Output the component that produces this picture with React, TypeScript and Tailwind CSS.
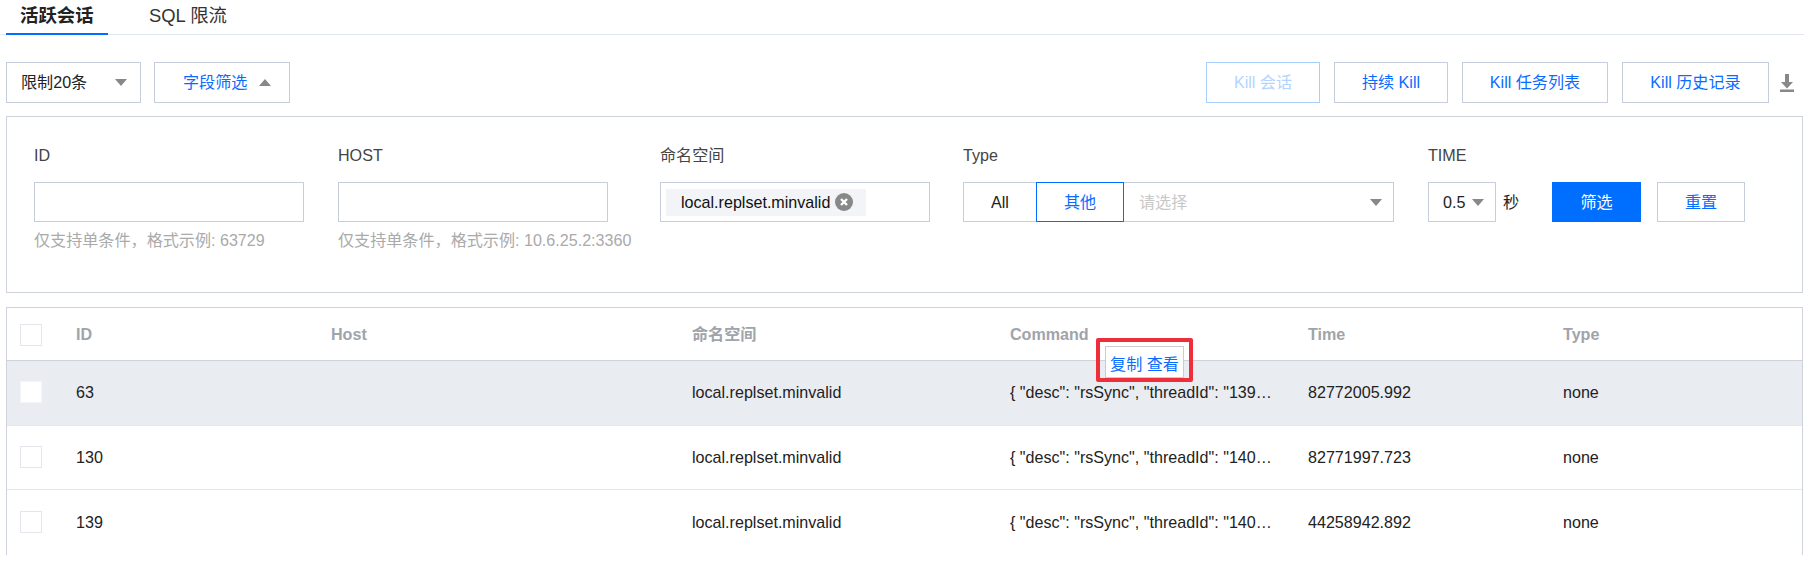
import React from 'react';

const rows = [
  { id: '63', thread: '139', time: '82772005.992', hover: true },
  { id: '130', thread: '140', time: '82771997.723', hover: false },
  { id: '139', thread: '140', time: '44258942.892', hover: false },
];

const gridCols = 'grid grid-cols-[69px_255px_361px_318px_298px_255px_1fr] items-center';

function Caret({ up = false }: { up?: boolean }) {
  return (
    <svg width="12" height="7" viewBox="0 0 12 7" className="shrink-0">
      <path d={up ? 'M6 0l6 7H0z' : 'M0 0h12L6 7z'} fill="#888888" />
    </svg>
  );
}

function OutlineButton({ label, className = '' }: { label: string; className?: string }) {
  return (
    <button className={`h-[41px] border bg-white text-center ${className}`}>
      {label}
    </button>
  );
}

function Checkbox({ className = '' }: { className?: string }) {
  return <span className={`block h-[22px] w-[22px] border bg-white ${className}`} />;
}

function Field({ label, children }: { label: string; children: React.ReactNode }) {
  return (
    <div>
      <div className="h-6 leading-6 text-[#444444]">{label}</div>
      <div className="mt-[15px]">{children}</div>
    </div>
  );
}

export default function App() {
  return (
    <div className="relative h-[570px] w-[1804px] overflow-hidden bg-white font-['Liberation_Sans','Noto_Sans_CJK_SC',sans-serif] text-[16.1px] text-[#222222]">
      {/* Tabs */}
      <div className="flex h-[35px] border-b border-[#e3e7f0] pl-[6px] text-[18.4px]">
        <div className="h-[35px] w-[102px] border-b-2 border-[#006eff] pl-[14px] font-bold leading-[31px] text-[#222222]">
          活跃会话
        </div>
        <div className="ml-[41px] leading-[31px] text-[#333333]">SQL 限流</div>
      </div>

      {/* Toolbar */}
      <div className="mt-[27px] flex items-center justify-between pl-[6px] pr-[10px]">
        <div className="flex gap-[13px]">
          <div className="flex h-[41px] w-[135px] items-center justify-between border border-[#c6cedb] pl-[14px] pr-[13px]">
            <span>限制20条</span>
            <Caret />
          </div>
          <div className="flex h-[41px] w-[136px] items-center gap-[12px] border border-[#c6cedb] pl-[28px] text-[#0a6cff]">
            <span>字段筛选</span>
            <Caret up />
          </div>
        </div>
        <div className="flex items-center">
          <OutlineButton label="Kill 会话" className="w-[114px] border-[#a8d0ff] text-[#b3d4ff]" />
          <OutlineButton label="持续 Kill" className="ml-[14px] w-[114px] border-[#c6cedb] text-[#0a6cff]" />
          <OutlineButton label="Kill 任务列表" className="ml-[14px] w-[146px] border-[#c6cedb] text-[#0a6cff]" />
          <OutlineButton label="Kill 历史记录" className="ml-[14px] w-[147px] border-[#c6cedb] text-[#0a6cff]" />
          <svg width="14" height="18" viewBox="0 0 14 18" className="ml-[11px] mt-[1px]">
            <path d="M5 0h4v8h4l-6 6.5L1 8h4zM0 15.5h14V18H0z" fill="#888888" />
          </svg>
        </div>
      </div>

      {/* Filter panel */}
      <div className="ml-[6px] mr-[1px] mt-[13px] grid h-[177px] grid-cols-[304px_322px_303px_465px_1fr] border border-[#cdd2dc] pl-[27px] pt-[26px]">
        <Field label="ID">
          <div className="h-[40px] w-[270px] border border-[#c6cedb]" />
          <div className="mt-[6px] h-6 whitespace-nowrap leading-6 text-[#aaaaaa]">仅支持单条件，格式示例: 63729</div>
        </Field>
        <Field label="HOST">
          <div className="h-[40px] w-[270px] border border-[#c6cedb]" />
          <div className="mt-[6px] h-6 whitespace-nowrap leading-6 text-[#aaaaaa]">仅支持单条件，格式示例: 10.6.25.2:3360</div>
        </Field>
        <Field label="命名空间">
          <div className="flex h-[40px] w-[270px] items-center border border-[#c6cedb] pl-[5px]">
            <div className="flex h-[27px] w-[200px] items-center gap-[5px] bg-[#f2f4f8] pl-[15px] text-[#111111]">
              <span className="whitespace-nowrap">local.replset.minvalid</span>
              <svg width="18" height="18" viewBox="0 0 18 18" className="shrink-0">
                <circle cx="9" cy="9" r="9" fill="#888888" />
                <path d="M6 6l6 6M12 6l-6 6" stroke="#ffffff" strokeWidth="2.4" />
              </svg>
            </div>
          </div>
        </Field>
        <Field label="Type">
          <div className="flex h-[40px] w-[431px]">
            <div className="flex w-[73px] items-center justify-center border-y border-l border-[#c6cedb] text-[#222222]">All</div>
            <div className="flex w-[88px] items-center justify-center border border-[#006eff] text-[#0a6cff]">其他</div>
            <div className="flex flex-1 items-center justify-between border-y border-r border-[#c6cedb] pl-[15px] pr-[11px] text-[#c8c8c8]">
              <span>请选择</span>
              <Caret />
            </div>
          </div>
        </Field>
        <Field label="TIME">
          <div className="flex h-[40px] items-center">
            <div className="flex h-full w-[68px] items-center justify-between border border-[#c6cedb] pl-[14px] pr-[11px]">
              <span>0.5</span>
              <Caret />
            </div>
            <span className="ml-[7px]">秒</span>
            <button className="ml-[33px] h-full w-[89px] bg-[#006eff] text-white">筛选</button>
            <OutlineButton label="重置" className="ml-[16px] !h-full w-[88px] border-[#c6cedb] text-[#0a6cff]" />
          </div>
        </Field>
      </div>

      {/* Session table */}
      <div className="ml-[6px] mr-[1px] mt-[14px] border-x border-t border-[#cdd2dc]">
        <div className={`${gridCols} h-[53px] border-b border-[#cdd2dc] pt-[1px] font-bold text-[#a0a4aa]`}>
          <div className="pl-[13px]">
            <Checkbox className="border-[#e3e6ec]" />
          </div>
          <div>ID</div>
          <div>Host</div>
          <div>命名空间</div>
          <div>Command</div>
          <div>Time</div>
          <div>Type</div>
        </div>
        {rows.map((row) => (
          <div
            key={row.id}
            className={`${gridCols} h-[64.5px] border-b border-[#e3e6ec] pb-[1px] last:border-b-0 ${row.hover ? 'bg-[#e9ecf1]' : 'bg-white'}`}
          >
            <div className="pl-[13px]">
              <Checkbox className={row.hover ? 'border-[#f2f4f7]' : 'border-[#e3e6ec]'} />
            </div>
            <div>{row.id}</div>
            <div />
            <div>local.replset.minvalid</div>
            <div className="whitespace-nowrap">{`{ "desc": "rsSync", "threadId": "${row.thread}…`}</div>
            <div>{row.time}</div>
            <div>none</div>
          </div>
        ))}
      </div>

      {/* Highlighted copy / view popover */}
      <div className="absolute left-[1096px] top-[338px] h-[44px] w-[97px] rounded-[2px] border-[4px] border-[#ee2f3b] pl-[5px] pt-[4px]">
        <div className="flex h-[32px] w-[79px] items-center justify-center whitespace-nowrap border border-[#cccccc] bg-white pt-[5px] text-[16.1px] leading-none text-[#0a6cff]">
          复制 查看
        </div>
      </div>
    </div>
  );
}
